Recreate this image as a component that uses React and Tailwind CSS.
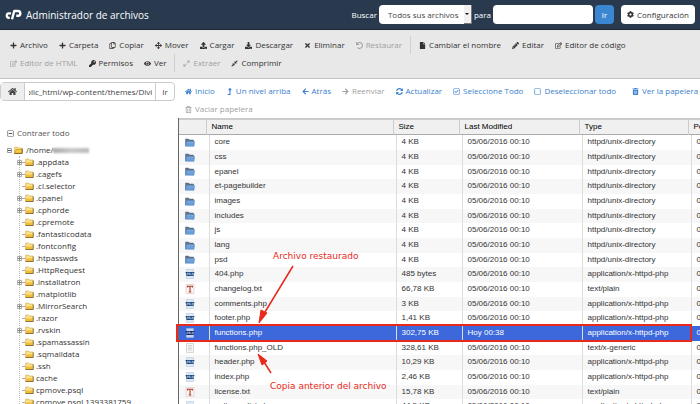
import {
  FaArrowLeft, FaArrowRight, FaCog, FaCompressAlt, FaDownload, FaExpandAlt, FaEye, FaFile,
  FaHome, FaKey, FaLevelUpAlt, FaPencilAlt, FaPlus, FaRegCheckSquare, FaRegCopy, FaRegEdit, FaRegMinusSquare,
  FaRegSquare, FaRegTrashAlt, FaSyncAlt, FaTimes, FaTrashAlt, FaUndo, FaUpload, FaArrowsAlt,
} from "react-icons/fa"

const toolbarTop = [
  { label: "Archivo", icon: FaPlus },
  { label: "Carpeta", icon: FaPlus },
  { label: "Copiar", icon: FaRegCopy },
  { label: "Mover", icon: FaArrowsAlt },
  { label: "Cargar", icon: FaUpload },
  { label: "Descargar", icon: FaDownload },
  { label: "Eliminar", icon: FaTimes },
  { label: "Restaurar", icon: FaUndo, disabled: true },
  { divider: true },
  { label: "Cambiar el nombre", icon: FaFile },
  { label: "Editar", icon: FaPencilAlt },
  { label: "Editor de código", icon: FaRegEdit },
]

const toolbarBottom = [
  { label: "Editor de HTML", icon: FaRegEdit, disabled: true },
  { label: "Permisos", icon: FaKey },
  { label: "Ver", icon: FaEye },
  { divider: true },
  { label: "Extraer", icon: FaExpandAlt, disabled: true },
  { label: "Comprimir", icon: FaCompressAlt },
]

const navActions = [
  { label: "Inicio", icon: FaHome },
  { label: "Un nivel arriba", icon: FaLevelUpAlt },
  { label: "Atrás", icon: FaArrowLeft },
  { label: "Reenviar", icon: FaArrowRight, disabled: true },
  { label: "Actualizar", icon: FaSyncAlt },
  { label: "Seleccione Todo", icon: FaRegCheckSquare },
  { label: "Deseleccionar todo", icon: FaRegSquare },
  { divider: true },
  { label: "Ver la papelera", icon: FaTrashAlt },
]

const tree = [
  { name: ".appdata", expandable: true },
  { name: ".cagefs", expandable: true },
  { name: ".cl.selector" },
  { name: ".cpanel", expandable: true },
  { name: ".cphorde", expandable: true },
  { name: ".cpremote" },
  { name: ".fantasticodata" },
  { name: ".fontconfig" },
  { name: ".htpasswds", expandable: true },
  { name: ".HttpRequest" },
  { name: ".installatron", expandable: true },
  { name: ".matplotlib" },
  { name: ".MirrorSearch", expandable: true },
  { name: ".razor" },
  { name: ".rvskin", expandable: true },
  { name: ".spamassassin" },
  { name: ".sqmaildata" },
  { name: ".ssh" },
  { name: "cache" },
  { name: "cpmove.psql" },
  { name: "cpmove.psql.1393381759" },
]

const DIR = "httpd/unix-directory"
const PHP = "application/x-httpd-php"

const files = [
  { name: "core", size: "4 KB", type: DIR },
  { name: "css", size: "4 KB", type: DIR },
  { name: "epanel", size: "4 KB", type: DIR },
  { name: "et-pagebuilder", size: "4 KB", type: DIR },
  { name: "images", size: "4 KB", type: DIR },
  { name: "includes", size: "4 KB", type: DIR },
  { name: "js", size: "4 KB", type: DIR },
  { name: "lang", size: "4 KB", type: DIR },
  { name: "psd", size: "4 KB", type: DIR },
  { name: "404.php", size: "485 bytes", type: PHP },
  { name: "changelog.txt", size: "66,78 KB", type: "text/plain" },
  { name: "comments.php", size: "3 KB", type: PHP },
  { name: "footer.php", size: "1,41 KB", type: PHP },
  { name: "functions.php", size: "302,75 KB", type: PHP, date: "Hoy 00:38", selected: true },
  { name: "functions.php_OLD", size: "328,61 KB", type: "text/x-generic" },
  { name: "header.php", size: "10,29 KB", type: PHP },
  { name: "index.php", size: "2,46 KB", type: PHP },
  { name: "license.txt", size: "15,78 KB", type: "text/plain" },
  { name: "options_divi.php", size: "44,5 KB", type: PHP },
]

function Logo() {
  return (
    <svg viewBox="0 0 34 22" className="h-[11px] w-[17px]" fill="none" stroke="#fff" strokeLinejoin="round">
      <path d="M12 8.500H8a4.500 4.500 0 0 0 0 9H9.500" strokeWidth="4.500" />
      <path d="M14 20.500L18.500 4H26.500a4.800 4.800 0 0 1 0 9.500H22.500" strokeWidth="4.800" />
    </svg>
  )
}

function TreeFolder({ open }) {
  return (
    <svg viewBox="0 0 18 16" className="h-2 w-[9px] shrink-0">
      <path d="M1 3.500L2 2h5l1.500 2H16v10.500H1z" fill="#fbe08a" stroke="#c79a2c" />
      {open ? (
        <path d="M4 7h13.500L15 14.500H1z" fill="#f7c948" stroke="#a87912" />
      ) : (
        <path d="M1.500 9h14v5h-14z" fill="#f0bd3c" />
      )}
      <path d="M1 15h15.500V5" fill="none" stroke="#6d5010" strokeWidth="1.500" />
    </svg>
  )
}

function FileIcon({ type, selected }) {
  if (type === DIR) {
    return (
      <svg viewBox="0 0 20 18" className="h-[9px] w-[10px]">
        <path d="M1 16V2h6l2 2h8v5" fill="#61758b" stroke="#54687e" />
        <path d="M1 16.500L2.500 7H19l-1 9.500z" fill="#6c9fd8" stroke="#4a7db8" />
        <path d="M4 8.500H17.500" stroke="#98bde6" />
      </svg>
    )
  }
  if (type === PHP) {
    return (
      <svg viewBox="0 0 20 20" className="h-[10px] w-[10px]">
        <path d="M3 1h14v18H3z" fill={selected ? "#c3d2f6" : "#dce8f4"} stroke="#a9bfd8" />
        <path d="M1 6h18l-2 8H3z" fill={selected ? "#142a66" : "#1f4a80"} />
        <path d="M4 12V8.500h3v2H4M9 7v5M9 9.500h2V12M14 13V8.500h3v2h-3" fill="none" stroke="#dfeaf6" />
      </svg>
    )
  }
  if (type === "text/plain") {
    return (
      <svg viewBox="0 0 20 20" className="h-[10px] w-[10px]">
        <path d="M2 1h16v18H2z" fill="#fbf4f2" stroke="#cdbab6" />
        <path d="M5 7V4.500h10V7M10 5v11M7.500 16h5" fill="none" stroke="#b5392c" strokeWidth="2.200" />
      </svg>
    )
  }
  return (
    <svg viewBox="0 0 20 20" className="h-[10px] w-[10px]">
      <path d="M3 1h14v18H3z" fill="#f5f5f3" stroke="#b4b4b0" />
      <path d="M6 5h8M6 8h8M6 11h8M6 14h8" stroke="#b9b9b5" />
    </svg>
  )
}

function Action({ item, color }) {
  if (item.divider) return <span className="-mx-[3px] h-[18px] w-px bg-[#d0d0d0]" />
  const Icon = item.icon
  return (
    <button
      disabled={item.disabled}
      className={`flex items-center gap-[3px] whitespace-nowrap ${item.disabled ? "text-[#a0a0a0]" : color}`}
    >
      <Icon className="size-[7px]" />
      {item.label}
    </button>
  )
}

function Header() {
  return (
    <header className="flex h-[30px] items-center border-b border-[#1b2839] bg-[#293a4f] px-[5px] text-white">
      <Logo />
      <h1 className="ml-1 text-[10px]">Administrador de archivos</h1>
      <form className="ml-auto flex items-center gap-[2px]">
        <label htmlFor="scope">Buscar</label>
        <div className="relative">
          <select id="scope" className="h-[19px] w-[93px] appearance-none rounded-sm bg-white pl-[9px] text-[#444]">
            <option>Todos sus archivos</option>
          </select>
          <span className="pointer-events-none absolute inset-y-0 right-0 flex w-2 items-center justify-center border-r border-b border-[#777] bg-[#f0f0f0]">
            <svg viewBox="0 0 4 2" className="h-[2px] w-1">
              <path d="M0 0h4L2 2z" fill="#111" />
            </svg>
          </span>
        </div>
        <label htmlFor="query">para</label>
        <input id="query" className="h-[19px] w-[100px] rounded-sm bg-white px-1 text-[#333]" />
        <button type="button" className="h-[19px] w-[19px] rounded-sm bg-[#3b86d0]">Ir</button>
      </form>
      <button className="ml-[7px] flex h-[19px] items-center gap-[3px] rounded-sm bg-white px-[6px] text-[#333]">
        <FaCog className="size-[7px]" />
        Configuración
      </button>
    </header>
  )
}

function Sidebar() {
  return (
    <aside className="w-[178px] shrink-0 pt-[3px]">
      <form className="mr-[3px] flex h-[19px] rounded-sm border border-[#ccc]">
        <button type="button" aria-label="Inicio" className="flex w-6 items-center justify-center border-r border-[#ccc] bg-[#eee] text-[#444]">
          <FaHome className="size-[9px]" />
        </button>
        <input aria-label="Ruta" defaultValue="blic_html/wp-content/themes/Divi" className="min-w-0 flex-1 pl-1 -indent-[3px] text-[#444]" />
        <button type="button" className="w-[19px] border-l border-[#ccc] text-[#444]">Ir</button>
      </form>
      <button className="mt-[26px] flex h-3 items-center gap-[3px] pl-[7px] text-[#555]">
        <FaRegMinusSquare className="size-[7px]" />
        Contraer todo
      </button>
      <div className="mt-[5px] flex h-3 items-center gap-[2px] pl-[7px]">
        <svg viewBox="0 0 5 5" className="size-[5px] shrink-0">
          <path d="M.5 .5h4v4h-4z" fill="#fff" stroke="#999" />
          <path d="M1 2.500h3" stroke="#555" />
        </svg>
        <TreeFolder open />
        <span className="flex items-center pl-px">
          /home/
          <span className="h-[5px] w-9 bg-linear-to-r from-[#aaa] via-[#c9c9c9] to-[#bbb] blur-[1px]" />
        </span>
      </div>
      <ul className="ml-[19px] border-l border-dotted border-[#bbb]">
        {tree.map((node) => (
          <li key={node.name} className="flex h-3 items-center whitespace-nowrap">
            {node.expandable ? (
              <svg viewBox="0 0 5 5" className="-ml-[3px] size-[5px] shrink-0">
                <path d="M.5 .5h4v4h-4z" fill="#fff" stroke="#aaa" />
                <path d="M1 2.500h3M2.500 1v3" stroke="#888" />
              </svg>
            ) : (
              <span className="w-[2px]" />
            )}
            <span className="mr-px w-[2px] border-t border-dotted border-[#aaa]" />
            <TreeFolder />
            <span className="ml-[2px]">{node.name}</span>
          </li>
        ))}
      </ul>
    </aside>
  )
}

function FileTable() {
  return (
    <div className="relative border-l border-[#666]">
      <table className="w-full table-fixed border-t-2 border-b border-t-[#ccc] border-b-[#aaa] bg-[#f0f0f0] text-left text-black">
        <colgroup>
          <col className="w-[27px]" />
          <col className="w-[187px]" />
          <col className="w-[66px]" />
          <col className="w-[120px]" />
          <col className="w-[109px]" />
          <col />
        </colgroup>
        <thead>
          <tr className="h-[15px]">
            <th />
            {["Name", "Size", "Last Modified", "Type", "Permissions"].map((title) => (
              <th key={title} className="overflow-hidden border-l border-[#ccc] pl-[5px] font-normal whitespace-nowrap">
                {title}
              </th>
            ))}
          </tr>
        </thead>
      </table>
      <table className="w-full table-fixed text-left">
        <colgroup>
          <col className="w-[30px]" />
          <col className="w-[187px]" />
          <col className="w-[66px]" />
          <col className="w-[120px]" />
          <col className="w-[109px]" />
          <col />
        </colgroup>
        <tbody>
          {files.map((file) => (
            <tr
              key={file.name}
              className={`h-[15px] whitespace-nowrap nth-[3n]:h-[14px] [&>td]:overflow-hidden [&>td+td]:border-l [&>td+td]:border-[#ddd] [&>td+td]:pl-[5px] ${
                file.selected ? "bg-[#3c68dc] text-white" : "even:bg-[#f7f7f7]"
              }`}
            >
              <td className="pl-[6px]">
                <FileIcon type={file.type} selected={file.selected} />
              </td>
              <td>{file.name}</td>
              <td>{file.size}</td>
              <td>{file.date ?? "05/06/2016 00:10"}</td>
              <td>{file.type}</td>
              <td>{file.type === DIR ? "0755" : "0644"}</td>
            </tr>
          ))}
        </tbody>
      </table>
      <Annotations />
    </div>
  )
}

// Red marks drawn over the file list
function Annotations() {
  return (
    <div className="pointer-events-none absolute inset-0 font-['DejaVu_Sans',sans-serif] text-[9px] text-[#e8291c]">
      <div className="absolute top-[206px] -left-[3px] h-[18px] w-[516px] border-2 border-[#e8291c]" />
      <p className="absolute top-[132px] left-[94px]">Archivo restaurado</p>
      <p className="absolute top-[262px] left-[91px]">Copia anterior del archivo</p>
      <svg viewBox="0 0 60 120" className="absolute top-[142px] left-[70px] h-[120px] w-[60px]" fill="#e8291c" stroke="#e8291c">
        <path d="M44 6L16 52" strokeWidth="1.500" />
        <path d="M10 63L12 50L18 53z" />
        <path d="M22 113L15 102" strokeWidth="1.500" />
        <path d="M9 94L18 101L13 105z" />
      </svg>
    </div>
  )
}

export default function App() {
  return (
    <div className="flex h-screen flex-col overflow-hidden bg-white font-['Open_Sans',sans-serif] text-[8px] leading-3 text-[#333]">
      <Header />
      <div className="border-b border-[#c4c4c4] bg-[#e8e8e8] px-[10px] py-[6px]">
        <div className="flex h-[18px] items-center gap-[11px]">
          {toolbarTop.map((item, i) => (
            <Action key={i} item={item} color="text-[#333]" />
          ))}
        </div>
        <div className="flex h-[18px] items-center gap-[11px]">
          {toolbarBottom.map((item, i) => (
            <Action key={i} item={item} color="text-[#333]" />
          ))}
        </div>
      </div>
      <div className="flex min-h-0 flex-1">
        <Sidebar />
        <main className="min-w-0 flex-1">
          <nav className="px-[7px] pt-[3px]">
            <div className="flex h-[18px] items-center gap-[11px]">
              {navActions.map((item, i) => (
                <Action key={i} item={item} color="text-[#3a80cc]" />
              ))}
            </div>
            <div className="flex h-[18px] items-center">
              <Action item={{ label: "Vaciar papelera", icon: FaRegTrashAlt, disabled: true }} />
            </div>
          </nav>
          <div className="font-['Liberation_Sans',sans-serif]">
            <FileTable />
          </div>
        </main>
      </div>
    </div>
  )
}
